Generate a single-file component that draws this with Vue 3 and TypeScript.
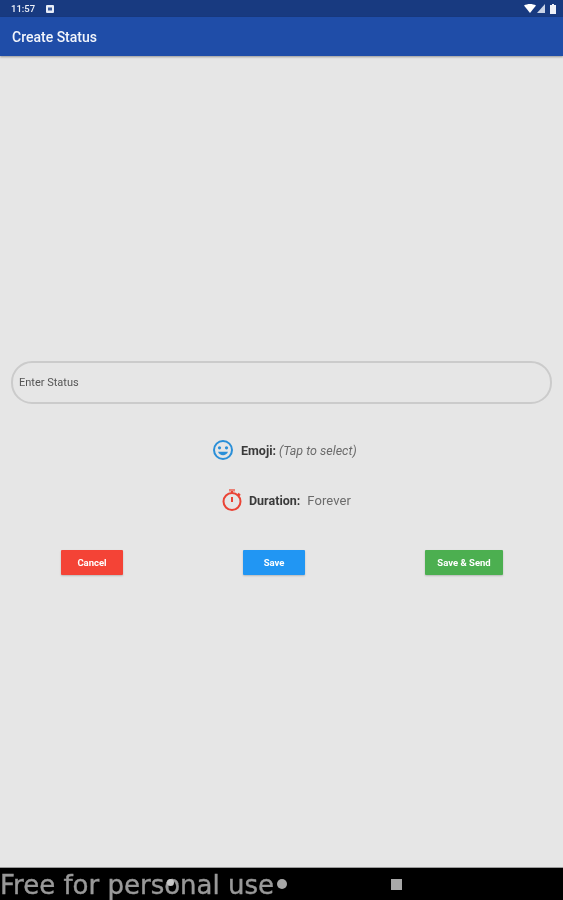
<script setup lang="ts">
import { ref } from 'vue'

const statusText = ref('')

const buttons = [
  { label: 'Cancel', cls: 'btn-cancel' },
  { label: 'Save', cls: 'btn-save' },
  { label: 'Save & Send', cls: 'btn-send' },
]
</script>

<template>
  <div class="screen">
    <div class="status-bar">
      <div class="status-left">
        <span class="clock">11:57</span>
        <svg class="notif" width="8" height="8" viewBox="0 0 8 8">
          <rect width="8" height="8" rx="1" fill="#e8edf7" />
          <rect x="2" y="2.5" width="4" height="3" fill="#3a5a9c" />
        </svg>
      </div>
      <div class="status-right">
        <svg width="12" height="9" viewBox="0 0 12 9"><path d="M0 1.5C3.5-.5 8.500-.5 12 1.500L6 9z" fill="#fff" /></svg>
        <svg width="8" height="9" viewBox="0 0 8 9"><path d="M8 0v9H0z" fill="#c9d3e6" /></svg>
        <svg class="battery" width="6" height="10" viewBox="0 0 6 10"><path d="M2 0h2v1h2v9H0V1h2z" fill="#eef1f8" /></svg>
      </div>
    </div>

    <header class="app-bar">Create Status</header>

    <main class="content">
      <input v-model="statusText" class="status-input" type="text" placeholder="Enter Status" />

      <div class="option-row emoji-row">
        <svg width="22" height="22" viewBox="0 0 22 22" fill="none">
          <circle cx="11" cy="11" r="9" stroke="#2a8fd8" stroke-width="2" />
          <circle cx="7.500" cy="8.800" r="1.600" fill="#2a8fd8" />
          <circle cx="14.500" cy="8.800" r="1.600" fill="#2a8fd8" />
          <path d="M6 12.800c.8 2.300 2.800 3.500 5 3.500s4.200-1.200 5-3.500z" fill="#2a8fd8" />
        </svg>
        <span class="option-label">Emoji:</span>
        <em class="option-hint">(Tap to select)</em>
      </div>

      <div class="option-row duration-row">
        <svg width="22" height="24" viewBox="0 0 22 24" fill="none">
          <circle cx="11" cy="13.500" r="8.500" stroke="#ea4335" stroke-width="2" />
          <rect x="8" y="1" width="6" height="2.500" fill="#ea8075" />
          <rect x="10" y="3" width="2" height="2" fill="#ea4335" />
          <path d="M17 5.500l2 2" stroke="#ea4335" stroke-width="2" />
          <path d="M11 9v5" stroke="#ea4335" stroke-width="2" />
        </svg>
        <span class="option-label">Duration:</span>
        <span class="option-value">Forever</span>
      </div>

      <div class="button-row">
        <button v-for="b in buttons" :key="b.label" class="btn" :class="b.cls">{{ b.label }}</button>
      </div>
    </main>

    <footer class="nav-bar">
      <span class="watermark">Free for personal use</span>
      <span class="nav-back"></span>
      <span class="nav-home"></span>
      <span class="nav-recent"></span>
    </footer>
  </div>
</template>

<style>
html, body {
  margin: 0;
  background: #e6e6e6;
}
</style>

<style scoped>
/* the reference is an upscaled capture, so everything is slightly soft */
.screen {
  width: 563px;
  height: 900px;
  display: flex;
  flex-direction: column;
  overflow: hidden;
  background: #e6e6e6;
  font-family: Roboto, "Liberation Sans", sans-serif;
  filter: blur(0.45px);
}

.status-bar {
  height: 17px;
  flex: none;
  display: flex;
  justify-content: space-between;
  align-items: center;
  padding: 0 7px 0 11px;
  background: #183a80;
  color: #eef1f8;
}

.status-left {
  display: flex;
  align-items: center;
  gap: 11px;
}

.clock {
  font-size: 9.500px;
  font-weight: 500;
}

.status-right {
  display: flex;
  align-items: center;
  gap: 1px;
}

.battery {
  margin-left: 4px;
}

.app-bar {
  height: 39px;
  flex: none;
  display: flex;
  align-items: center;
  padding-left: 12px;
  box-sizing: border-box;
  background: #1f4da8;
  color: #f2f5fb;
  font-size: 14px;
  font-weight: 500;
  box-shadow: 0 1px 2px rgba(0, 0, 0, 0.35);
  position: relative;
}

.content {
  flex: 1;
  display: flex;
  flex-direction: column;
  padding: 305px 11px 0;
}

.status-input {
  height: 43px;
  box-sizing: border-box;
  width: 100%;
  padding: 0 6px;
  border: 2px solid #cbcbcb;
  border-radius: 21px;
  background: transparent;
  outline: none;
  font-family: inherit;
  font-size: 11px;
}

.status-input::placeholder {
  color: #555;
  opacity: 1;
}

.option-row {
  display: flex;
  align-items: center;
  height: 24px;
  font-size: 12.500px;
}

.emoji-row {
  margin-top: 34px;
  gap: 7px;
  padding-left: 201px;
}

.duration-row {
  margin-top: 26px;
  gap: 6px;
  padding-left: 210px;
}

.option-label {
  font-weight: 700;
  color: #3a3a3a;
  font-size: 12.500px;
}

.option-hint {
  color: #6b6b6b;
  margin-left: -4px;
}

.option-value {
  color: #6b6b6b;
  font-size: 13px;
  letter-spacing: 0.1px;
  margin-left: 1px;
}

.button-row {
  margin-top: 38px;
  padding: 0 49px 0 50px;
  display: flex;
  justify-content: space-between;
  align-items: center;
}

.btn {
  height: 25px;
  border: none;
  border-radius: 1px;
  color: #fff;
  font-family: inherit;
  font-size: 9.500px;
  font-weight: 700;
  padding: 0;
  box-shadow: 0 1px 2px rgba(0, 0, 0, 0.2);
}

.btn-cancel {
  width: 62px;
  background: #f44336;
}

.btn-save {
  width: 62px;
  background: #2196f3;
}

.btn-send {
  width: 78px;
  background: #4caf50;
}

.nav-bar {
  height: 33px;
  flex: none;
  position: relative;
  display: flex;
  align-items: center;
  background: #000;
  border-top: 1px solid #9a9a9a;
  box-sizing: border-box;
}

.watermark {
  font-family: "DejaVu Sans", sans-serif;
  font-size: 26px;
  color: #999;
  line-height: 33px;
  margin-top: 2px;
  white-space: nowrap;
  -webkit-text-stroke: 0.4px #999;
}

.nav-back {
  position: absolute;
  left: 167px;
  top: 11px;
  width: 7px;
  height: 7px;
  border-radius: 50%;
  background: #c8c8c8;
}

.nav-home {
  position: absolute;
  left: 277px;
  top: 11px;
  width: 10px;
  height: 10px;
  border-radius: 50%;
  background: #a8a8a8;
}

.nav-recent {
  position: absolute;
  left: 391px;
  top: 11px;
  width: 11px;
  height: 11px;
  background: #a8a8a8;
}
</style>
